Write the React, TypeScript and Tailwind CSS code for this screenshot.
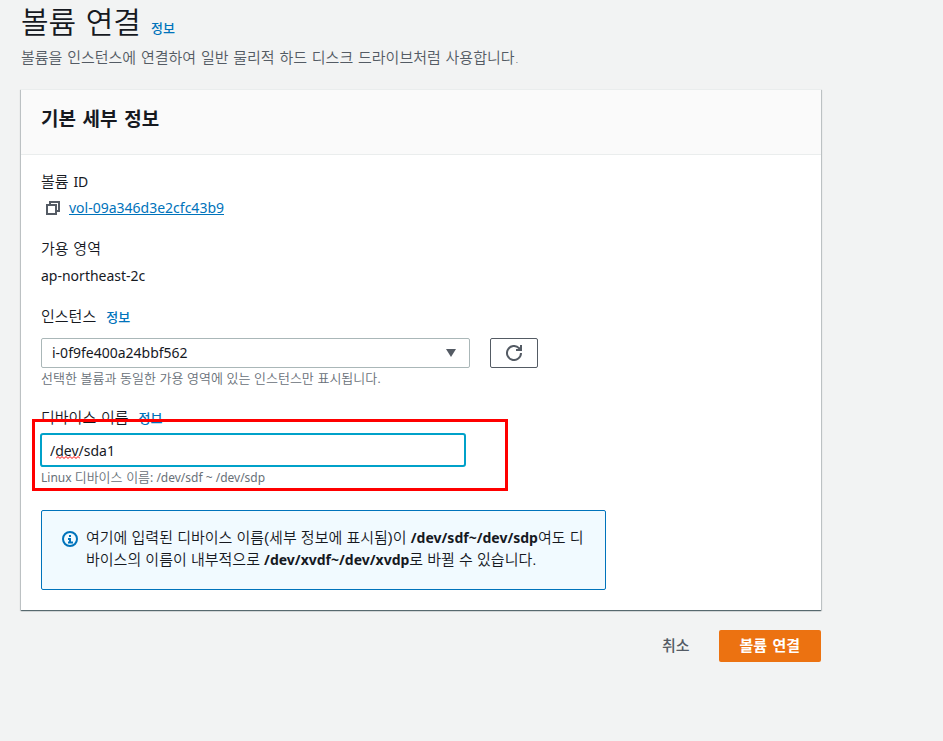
import { useState } from 'react';
import type { ReactNode } from 'react';

const latin = "font-['Noto_Sans','Noto_Sans_CJK_KR',sans-serif] text-sm font-normal";

function InfoLink() {
  return (
    <a href="#info" className="ml-2.5 text-[13px] font-medium text-[#0073bb]">
      정보
    </a>
  );
}

function Hint({ children }: { children: ReactNode }) {
  return (
    <p className="mt-0.5 font-['Liberation_Sans','Noto_Sans_CJK_KR',sans-serif] text-[13px] leading-[18px] text-[#687078]">
      {children}
    </p>
  );
}

function CopyIcon() {
  return (
    <svg viewBox="0 0 16 16" className="size-4" fill="none" stroke="#545b64" strokeWidth="2" aria-hidden="true">
      <path d="M2 5h9v9H2z" />
      <path d="M5 5V2h9v9h-3" />
    </svg>
  );
}

function RefreshIcon() {
  return (
    <svg viewBox="0 0 16 16" className="size-4" fill="none" stroke="#545b64" strokeWidth="2" aria-hidden="true">
      <path d="M15 8a7 7 0 1 1-2-4.9L15 5" />
      <path d="M15 0v5h-5" />
      <path d="M11 5h4V1z" fill="#545b64" stroke="none" />
    </svg>
  );
}

function InfoIcon() {
  return (
    <svg viewBox="0 0 16 16" className="mt-1 size-4 shrink-0" fill="none" stroke="#0073bb" strokeWidth="2" aria-hidden="true">
      <circle cx="8" cy="8" r="7" />
      <path d="M8 4v2M6 8h2v3M6 11.5h5" strokeWidth="2" />
    </svg>
  );
}

export default function App() {
  const [device, setDevice] = useState('/dev/sda1');

  return (
    <div className="min-h-screen bg-[#f2f3f3] px-[21px] pt-[5px] pb-10 font-['DejaVu_Sans','Noto_Sans_CJK_KR',sans-serif] text-[15px] leading-[22px] font-[350] text-[#16191f]">
      <main className="max-w-[800px]">
        <header>
          <div className="flex items-baseline">
            <h1 className="text-[30px] leading-9">볼륨 연결</h1>
            <InfoLink />
          </div>
          <p className="mt-1.5 text-[#545b64]">
            볼륨을 인스턴스에 연결하여 일반 물리적 하드 디스크 드라이브처럼 사용합니다.
          </p>
        </header>

        <form id="attach" onSubmit={(e) => e.preventDefault()}>
          <section className="mt-5 bg-white shadow-[0_1px_1px_0_rgba(0,28,36,0.5),1px_1px_1px_0_rgba(0,28,36,0.15),-1px_1px_1px_0_rgba(0,28,36,0.15)]">
            <div className="border-t border-b border-[#eaeded] bg-[#fafafa] px-5 pt-4 pb-[22px]">
              <h2 className="text-[19px] leading-[26px] font-bold">기본 세부 정보</h2>
            </div>
            <div className="flex flex-col gap-[19px] px-5 pt-4 pb-5">
              <div>
                <div>
                  볼륨 <span className={latin}>ID</span>
                </div>
                <div className="mt-1 flex items-center gap-2 pl-1">
                  <button type="button" aria-label="복사">
                    <CopyIcon />
                  </button>
                  <a href="#volume" className={`${latin} leading-[22px] text-[#0073bb] underline`}>
                    vol-09a346d3e2cfc43b9
                  </a>
                </div>
              </div>

              <div>
                <div>가용 영역</div>
                <div className={`${latin} mt-[5px] leading-[22px]`}>ap-northeast-2c</div>
              </div>

              <div>
                <div>
                  <label htmlFor="instance">인스턴스</label>
                  <InfoLink />
                </div>
                <div className="mt-[9px] flex gap-5">
                  <div className="relative w-full max-w-[429px]">
                    <select
                      id="instance"
                      className={`${latin} h-[30px] w-full appearance-none rounded-[2px] border border-[#aab7b8] bg-white px-2.5`}
                    >
                      <option>i-0f9fe400a24bbf562</option>
                    </select>
                    <svg viewBox="0 0 10 8" className="pointer-events-none absolute top-[11px] right-3.5 h-2 w-2.5" fill="#545b64" aria-hidden="true">
                      <path d="M0 0h10L5 8z" />
                    </svg>
                  </div>
                  <button
                    type="button"
                    aria-label="새로 고침"
                    className="flex h-[30px] w-12 shrink-0 items-center justify-center rounded-[2px] border border-[#545b64] bg-white"
                  >
                    <RefreshIcon />
                  </button>
                </div>
                <Hint>선택한 볼륨과 동일한 가용 영역에 있는 인스턴스만 표시됩니다.</Hint>
              </div>

              <div className="relative">
                <div>
                  <label htmlFor="device">디바이스 이름</label>
                  <InfoLink />
                </div>
                <div className="relative mt-[3px] -ml-px max-w-[426px]">
                  <input
                    id="device"
                    type="text"
                    value={device}
                    onChange={(e) => setDevice(e.target.value)}
                    className={`${latin} block h-[34px] w-full rounded-[3px] border-2 border-[#00a1c9] bg-white px-2 outline-none`}
                  />
                  <svg viewBox="0 0 24 3" className="pointer-events-none absolute top-[23px] left-4 h-[3px] w-6" fill="none" stroke="#f00" aria-hidden="true">
                    <path d="M0 2.5l2-2 2 2 2-2 2 2 2-2 2 2 2-2 2 2 2-2 2 2 2-2 2 2" />
                  </svg>
                </div>
                <Hint>
                  <span className="font-['Noto_Sans',sans-serif] text-xs font-normal">Linux </span>
                  디바이스 이름
                  <span className="font-['Noto_Sans',sans-serif] text-xs font-normal">: /dev/sdf ~ /dev/sdp</span>
                </Hint>
                <div className="pointer-events-none absolute top-3 -bottom-1 -left-[9px] w-[476px] border-3 border-[#f00]" />
              </div>

              <div className="mt-1 flex min-h-20 max-w-[565px] gap-2 rounded-[2px] border border-[#0073bb] bg-[#f1faff] pt-4 pr-5 pb-4 pl-5">
                <InfoIcon />
                <p className="font-['Liberation_Sans','Noto_Sans_CJK_KR',sans-serif] break-all">
                  여기에 입력된 디바이스 이름(세부 정보에 표시됨)이 <b className="font-['Noto_Sans',sans-serif] text-sm font-bold">/dev/sdf~/dev/sdp</b>여도 디바이스의 이름이 내부적으로{' '}
                  <b className="font-['Noto_Sans',sans-serif] text-sm font-bold">/dev/xvdf~/dev/xvdp</b>로 바뀔 수 있습니다.
                </p>
              </div>
            </div>
          </section>

          <div className="mt-5 flex justify-end gap-2">
            <button type="button" className="h-8 px-[21px] font-medium text-[#545b64]">
              취소
            </button>
            <button type="submit" className="h-8 rounded-[2px] bg-[#ec7211] px-[21px] font-bold text-white">
              볼륨 연결
            </button>
          </div>
        </form>
      </main>
    </div>
  );
}
